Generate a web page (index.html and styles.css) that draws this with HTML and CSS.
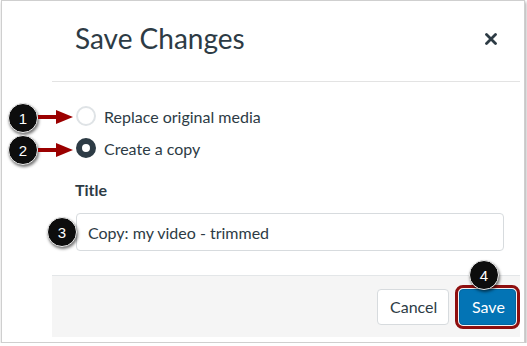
FILE: index.html
```html
<!DOCTYPE html>
<html>
<head>
<meta charset="utf-8">
<link rel="stylesheet" href="styles.css">
</head>
<body>
<div class="frame">
  <div class="dialog">
    <div class="header">
      <h1 class="title">Save Changes</h1>
      <button class="close" aria-label="Close">
        <svg width="12" height="12" viewBox="0 0 12 12"><path d="M1.5 1.5 L10.5 10.5 M10.5 1.5 L1.5 10.5" stroke="#2d3b45" stroke-width="2.8" stroke-linecap="round"/></svg>
      </button>
    </div>
    <div class="body">
      <label class="radio"><span class="dot"></span><span>Replace original media</span></label>
      <label class="radio"><span class="dot checked"></span><span>Create a copy</span></label>
      <div class="label">Title</div>
      <div class="input">Copy: my video - trimmed</div>
    </div>
    <div class="footer">
      <button class="btn cancel">Cancel</button>
      <button class="btn save">Save</button>
    </div>
  </div>

  <div class="callout c1">1</div>
  <div class="callout c2">2</div>
  <div class="callout c3">3</div>
  <div class="callout c4">4</div>
  <svg class="arrow a1" width="36" height="16" viewBox="0 0 36 16"><rect x="0" y="6" width="19" height="4" fill="#9b0000"/><path d="M18 1 L35 8 L18 15 Z" fill="#9b0000"/></svg>
  <svg class="arrow a2" width="36" height="16" viewBox="0 0 36 16"><rect x="0" y="6" width="19" height="4" fill="#9b0000"/><path d="M18 1 L35 8 L18 15 Z" fill="#9b0000"/></svg>
</div>
</body>
</html>
```
FILE: styles.css
```css
* { box-sizing: border-box; }
html, body { margin: 0; padding: 0; background: #fff; }
body { font-family: Lato, "Noto Sans", sans-serif; color: #2d3b45; }

.frame {
  position: relative;
  margin-left: 1px;
  width: 524px;
  height: 343px;
  border: 1px solid #cfcfcf;
  box-shadow: 1px 2px 3px rgba(0,0,0,0.35);
  background: #fff;
}

.dialog {
  margin-left: 50px;
  width: 468px;
  height: 336px;
  display: flex;
  flex-direction: column;
}

.header {
  height: 81px;
  border-bottom: 1px solid #e3e3e3;
  display: flex;
  align-items: center;
  justify-content: space-between;
  padding: 0 22px 0 23px;
}
.title {
  margin: 0;
  font-size: 28px;
  font-weight: 400;
  line-height: 34px;
  padding-bottom: 7px;
}
.close {
  border: 0;
  background: none;
  padding: 0;
  width: 14px;
  height: 14px;
  display: flex;
  align-items: center;
  justify-content: center;
  margin-bottom: 4px;
}

.body {
  flex: 1;
  padding: 18px 16px 0 24px;
  display: flex;
  flex-direction: column;
}
.radio {
  display: flex;
  align-items: center;
  gap: 8px;
  height: 32px;
  font-size: 16px;
}
.dot {
  width: 20px;
  height: 20px;
  border-radius: 50%;
  border: 2px solid #dfe3e6;
  background: #fff;
}
.dot.checked {
  border: 6px solid #2d3b45;
}
.label {
  margin-top: 14px;
  font-weight: 700;
  font-size: 16px;
  line-height: 24px;
  margin-left: -1px;
}
.input {
  margin-top: 11px;
  height: 38px;
  border: 1px solid #d7dbde;
  border-radius: 4px;
  display: flex;
  align-items: center;
  padding-left: 11px;
  font-size: 16px;
}

.footer {
  height: 62px;
  background: #f5f5f5;
  border-top: 1px solid #e3e6e8;
  display: flex;
  justify-content: flex-end;
  align-items: flex-start;
  gap: 10px;
  padding: 13px 4px 0 0;
}
.btn {
  font-family: Lato, "Noto Sans", sans-serif;
  font-size: 16px;
  height: 36px;
  border-radius: 4px;
  padding: 0 12px 1px;
}
.cancel {
  width: 72px;
  background: #fff;
  color: #2d3b45;
  border: 1px solid #d7dbde;
}
.save {
  width: 57px;
  background: #0374b5;
  color: #fff;
  border: 1px solid #0265a0;
  outline: 3px solid #8e0f0f;
  outline-offset: 1px;
}

.callout {
  position: absolute;
  width: 30px;
  height: 30px;
  border-radius: 50%;
  background: #0d0d0d;
  border: 1px solid #f0f0f0;
  color: #fff;
  font-family: "Liberation Sans", Arial, sans-serif;
  font-size: 15px;
  display: flex;
  align-items: center;
  justify-content: center;
  box-shadow: 1px 2px 3px rgba(0,0,0,0.55);
}
.c1 { left: 6px; top: 102px; }
.c2 { left: 6px; top: 134px; }
.c3 { left: 45px; top: 216px; }
.c4 { left: 467px; top: 259px; }

.arrow { position: absolute; }
.a1 { left: 36px; top: 108px; }
.a2 { left: 36px; top: 141px; }
```
